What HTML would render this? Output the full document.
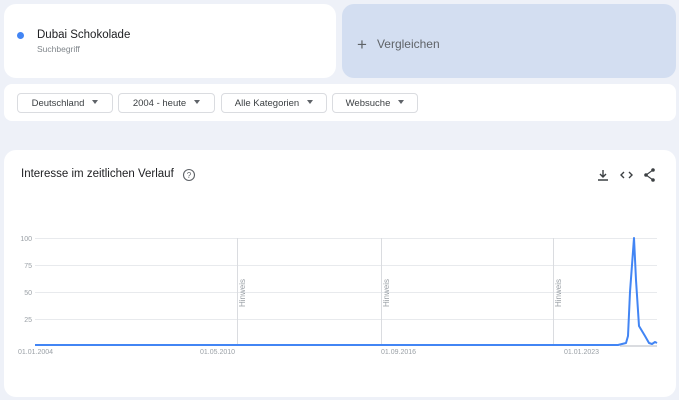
<!DOCTYPE html>
<html><head><meta charset="utf-8"><style>
body{margin:0;width:679px;height:400px;background:#eef1f8;font-family:"Liberation Sans",sans-serif;position:relative;overflow:hidden}
.card{position:absolute;background:#fff;border-radius:12px}
.btn{position:absolute;top:93px;height:20px;border:1px solid #dadce0;border-radius:4px;font-size:9.5px;color:#3c4043;line-height:20px;box-sizing:border-box;text-align:center}
.btn:after{content:"";display:inline-block;margin-left:8px;border:3.5px solid transparent;border-top:4px solid #5f6368;vertical-align:-1px}
</style></head><body>
<div class="card" style="left:4px;top:4px;width:332px;height:74px"></div>
<div style="position:absolute;left:17px;top:32px;width:7px;height:7px;border-radius:50%;background:#4285f4"></div>
<div style="position:absolute;left:37px;top:29px;font-size:11.5px;color:#202124">Dubai Schokolade</div>
<div style="position:absolute;left:37px;top:44px;font-size:8.5px;color:#80868b">Suchbegriff</div>
<div class="card" style="left:342px;top:4px;width:334px;height:74px;background:#d3def1"></div>
<div style="position:absolute;left:357px;top:35px;font-size:12px;color:#5f6368"><span style="font-size:17px;vertical-align:-2px;margin-right:10px">+</span>Vergleichen</div>
<div class="card" style="left:4px;top:84px;width:672px;height:37px;border-radius:8px"></div>
<div class="btn" style="left:17px;width:96px">Deutschland</div>
<div class="btn" style="left:118px;width:97px">2004 - heute</div>
<div class="btn" style="left:221px;width:106px">Alle Kategorien</div>
<div class="btn" style="left:332px;width:86px">Websuche</div>
<div class="card" style="left:4px;top:150px;width:672px;height:247px"></div>
<div style="position:absolute;left:21px;top:168px;font-size:11.5px;color:#202124">Interesse im zeitlichen Verlauf</div>
<svg style="position:absolute;left:0;top:0" width="679" height="400">
<circle cx="189" cy="175" r="5.5" fill="none" stroke="#5f6368" stroke-width="1.1"/>
<text x="189" y="178" font-size="8" text-anchor="middle" fill="#5f6368" font-family="Liberation Sans">?</text>
<path d="M603 170v7M600 174l3 3 3-3M598 180h10" stroke="#3c4043" stroke-width="1.4" fill="none"/>
<path d="M624 172l-3 3 3 3M629 172l3 3-3 3" stroke="#3c4043" stroke-width="1.4" fill="none"/>
<circle cx="653" cy="170" r="1.8" fill="#3c4043"/><circle cx="646" cy="175" r="1.8" fill="#3c4043"/><circle cx="653" cy="180" r="1.8" fill="#3c4043"/>
<path d="M653 170L646 175L653 180" stroke="#3c4043" stroke-width="1.1" fill="none"/>
<g stroke="#e8eaed" stroke-width="1"><path d="M35 238.5H657M35 265.5H657M35 292.5H657M35 319.5H657"/></g>
<g stroke="#dadce0"><path d="M237.5 238V346M381.5 238V346M553.5 238V346"/></g>
<g font-size="7" fill="#9aa0a6" font-family="Liberation Sans" text-anchor="end">
<text x="32" y="241">100</text><text x="32" y="268">75</text><text x="32" y="295">50</text><text x="32" y="322">25</text>
</g>
<g font-size="8" fill="#9aa0a6" font-family="Liberation Sans">
<text transform="translate(245,307) rotate(-90)">Hinweis</text>
<text transform="translate(389,307) rotate(-90)">Hinweis</text>
<text transform="translate(561,307) rotate(-90)">Hinweis</text>
</g>
<g font-size="7" fill="#9aa0a6" font-family="Liberation Sans">
<text x="18" y="354">01.01.2004</text><text x="200" y="354">01.05.2010</text><text x="381" y="354">01.09.2016</text><text x="564" y="354">01.01.2023</text>
</g>
<path d="M620 346H657" stroke="#dadce0" stroke-width="2"/>
<polyline points="35,345 618,345 622,344 626,343 628,336 630,292 634,238 636,280 639,326 645,336 649,343 652,344 655,342 657,343" fill="none" stroke="#4285f4" stroke-width="2" stroke-linejoin="round"/>
</svg>
</body></html>
